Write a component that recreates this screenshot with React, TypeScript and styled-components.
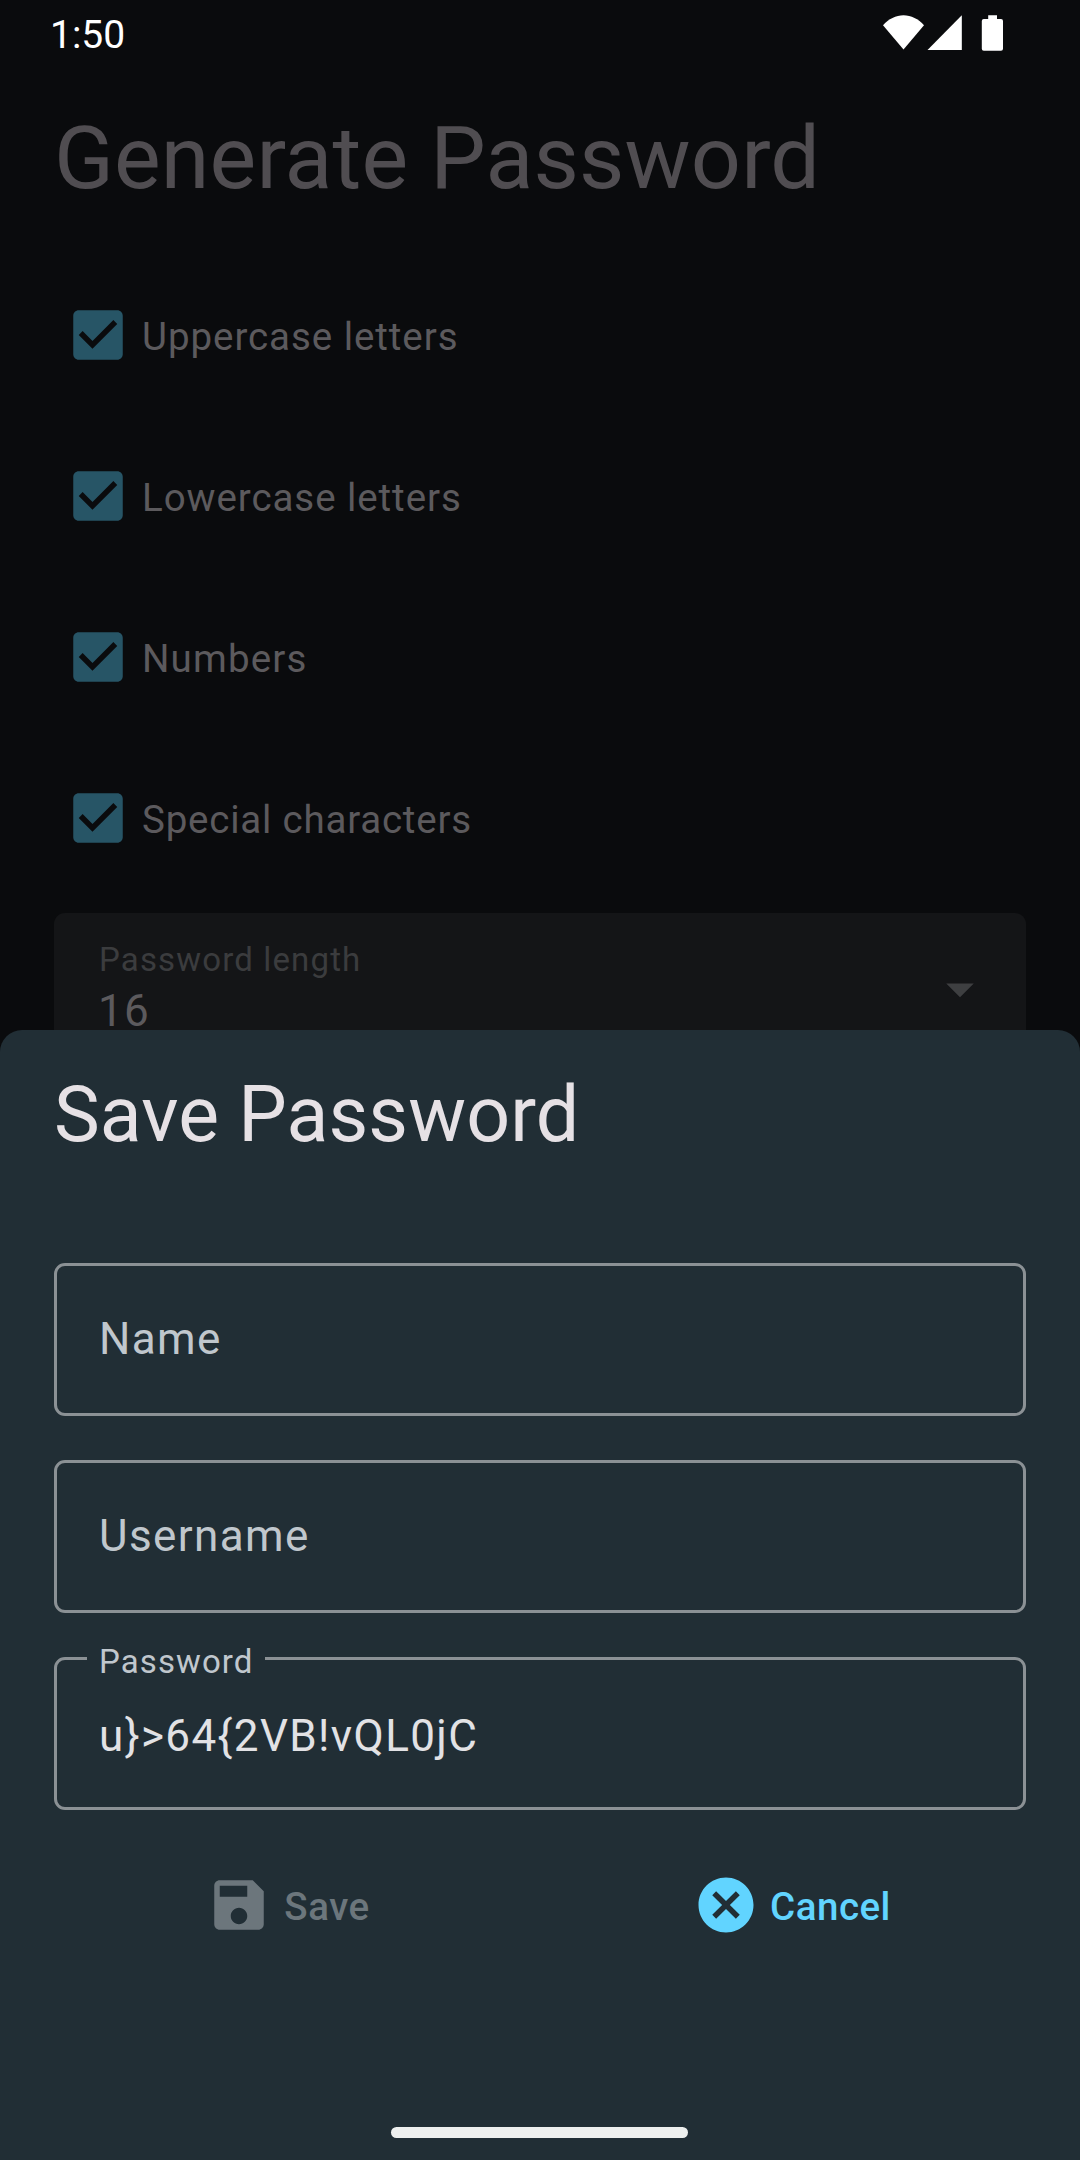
import React from "react";
import styled, { createGlobalStyle } from "styled-components";

const GlobalStyle = createGlobalStyle`
  * { box-sizing: border-box; }
  body {
    margin: 0;
    background: #0a0b0d;
    font-family: Roboto, "Noto Sans", sans-serif;
  }
`;

const Screen = styled.div`
  position: relative;
  width: 1080px;
  height: 2160px;
  overflow: hidden;
  background: #0a0b0d;
`;

const StatusBar = styled.header`
  display: flex;
  justify-content: space-between;
  height: 66px;
  padding: 12px 76px 0 50px;
`;

const Clock = styled.span`
  color: #ffffff;
  font-size: 39px;
  line-height: 46px;
`;

const StatusIcons = styled.svg`
  display: block;
  width: 122px;
  height: 42px;
  fill: #ffffff;
`;

const Page = styled.main`
  display: flex;
  flex-direction: column;
  padding: 37px 54px 0;
`;

const PageTitle = styled.h1`
  margin: 0;
  color: #504d51;
  font-size: 88px;
  font-weight: 400;
  line-height: 110px;
  letter-spacing: 0.13px;
`;

const Options = styled.div`
  display: flex;
  flex-direction: column;
  gap: 95px;
  margin-top: 89px;
  padding-left: 11px;
`;

const Option = styled.div`
  display: flex;
  align-items: center;
  gap: 11px;
  height: 66px;
`;

const OptionLabel = styled.span<{ $tracking: number }>`
  padding-top: 3px;
  color: #5c5a5d;
  font-size: 38.5px;
  line-height: 55px;
  letter-spacing: ${(p) => p.$tracking}px;
`;

const Icon = styled.svg<{ $color: string }>`
  display: block;
  flex: none;
  width: 66px;
  height: 66px;
  fill: ${(p) => p.$color};
`;

const Select = styled.div`
  display: flex;
  align-items: center;
  justify-content: space-between;
  height: 152px;
  margin-top: 62px;
  padding: 0 33px 0 44px;
  border-radius: 11px 11px 0 0;
  background: #141517;
`;

const SelectText = styled.div`
  display: flex;
  flex-direction: column;
`;

const SelectLabel = styled.span`
  padding-left: 1px;
  color: #3b3c3e;
  font-size: 33px;
  line-height: 44px;
  letter-spacing: 1.15px;
`;

const SelectValue = styled.span`
  color: #5c5a5d;
  font-size: 44px;
  line-height: 58px;
  letter-spacing: 1.38px;
`;

const Sheet = styled.section`
  position: absolute;
  left: 0;
  right: 0;
  bottom: 0;
  display: flex;
  flex-direction: column;
  height: 1130px;
  padding: 36px 54px 22px;
  border-radius: 22px 22px 0 0;
  background: #212e35;
`;

const SheetTitle = styled.h2`
  margin: 0 0 98px;
  color: #e6e1e5;
  font-size: 77px;
  font-weight: 400;
  line-height: 99px;
  letter-spacing: 0.1px;
`;

const Fields = styled.div`
  display: flex;
  flex-direction: column;
  gap: 44px;
`;

const Field = styled.div<{ $filled?: boolean }>`
  position: relative;
  display: flex;
  align-items: center;
  height: 153px;
  padding: ${(p) => (p.$filled ? "5px 42px 0" : "0 42px 1px")};
  border: 3px solid #8b9195;
  border-radius: 11px;
`;

const FieldText = styled.span<{ $color: string }>`
  color: ${(p) => p.$color};
  font-size: 44px;
  line-height: 66px;
  letter-spacing: 1.38px;
`;

const FloatingLabel = styled.span`
  position: absolute;
  top: -20px;
  left: 30px;
  width: 178px;
  padding-left: 12px;
  background: #212e35;
  color: #c0c7cd;
  font-size: 33px;
  line-height: 44px;
  letter-spacing: 1.1px;
`;

const Actions = styled.div`
  display: grid;
  grid-template-columns: 1fr 1fr;
  gap: 36px;
  margin-top: 62px;
`;

const Action = styled.button<{ $color: string; $gap: number }>`
  display: flex;
  align-items: center;
  justify-content: center;
  gap: ${(p) => p.$gap}px;
  height: 66px;
  padding: 0;
  border: 0;
  background: none;
  color: ${(p) => p.$color};
  font-family: inherit;
  font-size: 38.5px;
  font-weight: 500;
  letter-spacing: 0.5px;
`;

const ActionLabel = styled.span`
  padding-top: 3px;
  line-height: 55px;
`;

const HomeBar = styled.div`
  width: 297px;
  height: 11px;
  margin: auto auto 0 337px;
  border-radius: 5.5px;
  background: #edefee;
`;

const CHECK_BOX =
  "M19 3H5c-1.11 0-2 .9-2 2v14c0 1.1.89 2 2 2h14c1.11 0 2-.9 2-2V5c0-1.1-.89-2-2-2zm-9 14l-5-5 1.41-1.41L10 14.17l7.59-7.59L19 8l-9 9z";
const SAVE =
  "M17 3H5c-1.11 0-2 .9-2 2v14c0 1.1.89 2 2 2h14c1.1 0 2-.9 2-2V7l-4-4zm-5 16c-1.66 0-3-1.34-3-3s1.34-3 3-3 3 1.34 3 3-1.34 3-3 3zm3-10H5V5h10v4z";
const CANCEL =
  "M12 2C6.47 2 2 6.47 2 12s4.47 10 10 10 10-4.47 10-10S17.53 2 12 2zm5 13.59L15.59 17 12 13.41 8.41 17 7 15.59 10.59 12 7 8.41 8.41 7 12 10.59 15.59 7 17 8.41 13.41 12 17 15.59z";
const ARROW_DOWN = "M7 10l5 5 5-5z";

function Glyph({ path, color }: { path: string; color: string }) {
  return (
    <Icon viewBox="0 0 24 24" $color={color}>
      <path d={path} />
    </Icon>
  );
}

const options = [
  { label: "Uppercase letters", tracking: 0.94 },
  { label: "Lowercase letters", tracking: 0.93 },
  { label: "Numbers", tracking: 1.15 },
  { label: "Special characters", tracking: 0.78 },
];

export default function App() {
  return (
    <Screen>
      <GlobalStyle />
      <StatusBar>
        <Clock>1:50</Clock>
        <StatusIcons viewBox="882 12 122 42">
          <path d="M883 25.3C888.500 19 896 15.300 903.500 15.300S918.500 19 924 25.300L903.500 49.600Z" />
          <path d="M961.800 15.300V50H927.500Z" />
          <path d="M988.200 15.200h8.800v3.800h4a2 2 0 0 1 2 2v27.800a2 2 0 0 1-2 2h-17.200a2 2 0 0 1-2-2V21a2 2 0 0 1 2-2h4.400z" />
        </StatusIcons>
      </StatusBar>
      <Page>
        <PageTitle>Generate Password</PageTitle>
        <Options>
          {options.map(({ label, tracking }) => (
            <Option key={label}>
              <Glyph path={CHECK_BOX} color="#275566" />
              <OptionLabel $tracking={tracking}>{label}</OptionLabel>
            </Option>
          ))}
        </Options>
        <Select>
          <SelectText>
            <SelectLabel>Password length</SelectLabel>
            <SelectValue>16</SelectValue>
          </SelectText>
          <Glyph path={ARROW_DOWN} color="#3e3f41" />
        </Select>
      </Page>
      <Sheet>
        <SheetTitle>Save Password</SheetTitle>
        <Fields>
          <Field>
            <FieldText $color="#c0c7cd">Name</FieldText>
          </Field>
          <Field>
            <FieldText $color="#c0c7cd">Username</FieldText>
          </Field>
          <Field $filled>
            <FloatingLabel>Password</FloatingLabel>
            <FieldText $color="#e2e2e5">{"u}>64{2VB!vQL0jC"}</FieldText>
          </Field>
        </Fields>
        <Actions>
          <Action $color="#6c767c" $gap={12}>
            <Glyph path={SAVE} color="#6c767c" />
            <ActionLabel>Save</ActionLabel>
          </Action>
          <Action $color="#61d4ff" $gap={11}>
            <Glyph path={CANCEL} color="#61d4ff" />
            <ActionLabel>Cancel</ActionLabel>
          </Action>
        </Actions>
        <HomeBar />
      </Sheet>
    </Screen>
  );
}
